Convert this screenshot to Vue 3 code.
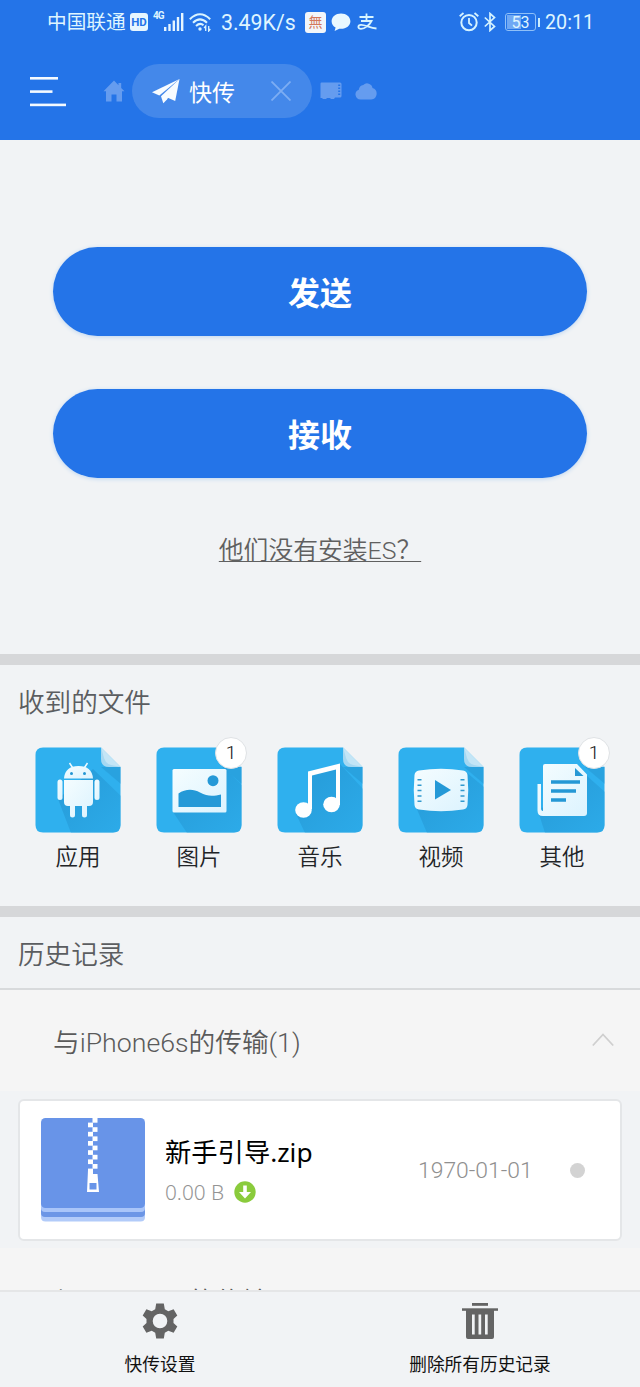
<script setup>
const categories = [
  { key: 'app', label: '应用' },
  { key: 'image', label: '图片', count: 1 },
  { key: 'music', label: '音乐' },
  { key: 'video', label: '视频' },
  { key: 'other', label: '其他', count: 1 },
]
const teeth = Array.from({ length: 12 }, (_, i) => ({ x: i % 2 ? 47 : 51.5, y: i * 4.6 }))
</script>

<template>
  <div class="screen">
    <header class="top">
      <div class="status">
        <span class="carrier">中国联通</span>
        <span class="hd">HD</span>
        <span class="net">4G</span>
        <svg class="signal" width="20" height="18" viewBox="0 0 20 18" fill="#e6f6ff">
          <rect x="0" y="14" width="2.4" height="4" /><rect x="4.3" y="11" width="2.4" height="7" />
          <rect x="8.6" y="7.5" width="2.4" height="10.5" /><rect x="12.8" y="4" width="2.4" height="14" />
          <rect x="17" y="0" width="2.4" height="18" />
        </svg>
        <svg class="wifi" width="22" height="19" viewBox="0 0 22 19" fill="none" stroke="#d9f4ff" stroke-width="2">
          <path d="M.8 6.2Q11-3.8 21.2 6.2M4 9.8Q11 3 18 9.8M7 13Q11 9.2 14.5 12.2" />
          <circle cx="11" cy="16" r="1.7" fill="#d9f4ff" stroke="none" />
          <path d="M16.7 18v-5l-1.6 2M19.7 13v5l1.6-2" stroke-width="1.3" />
        </svg>
        <span class="speed">3.49K/s</span>
        <span class="wu">無</span>
        <svg class="bubble" width="20" height="19" viewBox="0 0 20 19" fill="#e9f8ff">
          <path d="M10 .5C4.700 .5.600 3.900.600 8.200c0 2.800 1.600 5 4 6.400L3.600 18l4.700-2.300c.6.1 1.100.1 1.700.1 5.300 0 9.400-3.300 9.400-7.600S15.300.5 10 .5z" />
        </svg>
        <svg class="zhi" width="20" height="18" viewBox="0 0 20 18" fill="none" stroke="#d8f5ff" stroke-width="1.800">
          <path d="M2.500 4H16.500M9.500.500V8M4 8H14.500C12.500 12 8 15.800 4 15.800C.500 15.800.500 12 4 11.800C8 11.600 13 15 19.500 15.500" />
        </svg>
        <svg class="alarm" width="20" height="20" viewBox="0 0 20 20" fill="none" stroke="#d5f3ff" stroke-width="2">
          <circle cx="10" cy="10.600" r="7.700" /><path d="M10 6v5l3 2.700M.7 4.200 4.500 1M19.300 4.200 15.500 1" stroke-width="1.800" />
        </svg>
        <svg class="bt" width="12" height="20" viewBox="0 0 12 20" fill="none" stroke="#d5f3ff" stroke-width="1.700">
          <path d="M.8 5.500 10.500 14.500 6 18.500V1.500L10.500 5.500.8 14.500" />
        </svg>
        <span class="battery"><span class="level">53</span></span>
        <span class="nub"></span>
        <span class="clock">20:11</span>
      </div>
      <nav class="tabs">
        <svg class="menu" width="36" height="32" viewBox="0 0 36 32" fill="#f4faff">
          <rect y="1" width="28" height="2.600" /><rect y="14.300" width="22.500" height="2.600" /><rect y="27.600" width="36" height="2.600" />
        </svg>
        <svg class="home" width="22" height="22" viewBox="0 0 22 22" fill="#659cef">
          <path d="M11 .5.500 11.300H3V21.500H8.500V14.500H13.500V21.500H19V11.300H21.500L18.200 8V3H15.500V5.200z" />
        </svg>
        <div class="pill">
          <svg class="plane" width="28" height="25" viewBox="0 0 28 25" fill="#f8fcff">
            <path d="M27.500 0 0 13.200 7.300 16.500z" /><path d="M27.500 0 9 17.300 11.300 24.300 15 20.400z" />
            <path d="M27.500 0 13.500 17.700 23.200 22z" />
          </svg>
          <span class="pill-text">快传</span>
          <svg class="close" width="20" height="20" viewBox="0 0 20 20" stroke="#7dadf3" stroke-width="1.800"><path d="M.5.500 19.500 19.500M19.500.500.500 19.500" /></svg>
        </div>
        <svg class="sd" width="22" height="18" viewBox="0 0 22 18">
          <path fill="#659cef" d="M1.500.500h18.500q1.500 0 1.500 1.500v12q0 1.500-1.500 1.500h-5l-1 1.500h-3l-1-1H7l-1 1H3L2 16H.500V1.500q0-1 1-1z" />
          <path d="M19.200 2.500v12" stroke="#2474e8" stroke-width="2" stroke-dasharray="1.500 1.500" />
        </svg>
        <svg class="cloud" width="22" height="18" viewBox="0 0 22 18" fill="#659cef">
          <path d="M5.500 17.500a5 5 0 0 1-1.700-9.700A5.500 5.500 0 0 1 8.300 3 5.400 5.400 0 0 1 17.500 6a5.900 5.900 0 0 1-1.200 11.500z" />
        </svg>
      </nav>
    </header>

    <section class="actions">
      <button class="big">发送</button>
      <button class="big">接收</button>
      <a class="help">他们没有安装ES？</a>
    </section>

    <section class="files">
      <h2>收到的文件</h2>
      <div class="grid">
        <div v-for="c in categories" :key="c.key" class="cell">
          <div class="tile">
            <svg width="86" height="86" viewBox="0 0 86 86">
              <defs>
                <linearGradient :id="'sh' + c.key" x1="0" y1="0" x2="1" y2="1">
                  <stop offset=".3" stop-color="#2496d3" /><stop offset="1" stop-color="#2ba8e6" />
                </linearGradient>
                <linearGradient :id="'wh' + c.key" x1="0" y1="0" x2="1" y2="1">
                  <stop offset="0" stop-color="#f5fdff" /><stop offset="1" stop-color="#dcf3fe" />
                </linearGradient>
                <clipPath :id="'cp' + c.key"><path d="M8 .5H66L85.500 20V78q0 7.500-7.500 7.500H8Q.500 85.500.500 78V8Q.500.500 8 .5z" /></clipPath>
              </defs>
              <g :clip-path="`url(#cp${c.key})`">
                <rect width="86" height="86" fill="#2fb0ee" />
                <path v-if="c.key === 'app'" d="M23 52 36 86H86V49L58 22z" :fill="`url(#sh${c.key})`" opacity=".65" />
                <path v-else-if="c.key === 'image'" d="M17 65 31 86H86V38L69 22z" :fill="`url(#sh${c.key})`" opacity=".65" />
                <path v-else-if="c.key === 'music'" d="M19 67 28 86H86V42L63 17 32 27V55z" :fill="`url(#sh${c.key})`" opacity=".65" />
                <path v-else-if="c.key === 'video'" d="M18 60 29 86H86V40L68 25z" :fill="`url(#sh${c.key})`" opacity=".65" />
                <path v-else d="M19 64 26 86H86V45L67 28z" :fill="`url(#sh${c.key})`" opacity=".65" />
                <path d="M66 20H86V37z" fill="#2597d4" opacity=".55" />
                <path d="M66 0V12Q66 20 74 20H86z" fill="#a5d8f2" />
                <path d="M66 0 69 11Q71 17 76 18L86 20z" fill="#c3e5f6" />
              </g>
              <g v-if="c.key === 'app'" :fill="`url(#wh${c.key})`">
                <path d="M29 31.500Q30 19 43.500 19T58 31.500z" />
                <path d="M37.500 20.500 34.500 16M49.500 20.500 52.500 16" stroke="#eefaff" stroke-width="1.500" />
                <path d="M29 33H58V55q0 4-4 4H52V68q0 2.500-2.500 2.500T47 68V59H40V68q0 2.500-2.500 2.500T35 68V59H33q-4 0-4-4z" />
                <rect x="22.500" y="32.500" width="5" height="20.500" rx="2.500" /><rect x="59.500" y="32.500" width="5" height="20.500" rx="2.500" />
                <circle cx="36.500" cy="26.500" r="1.500" fill="#2496d3" /><circle cx="49.500" cy="26.500" r="1.500" fill="#2496d3" />
              </g>
              <g v-else-if="c.key === 'image'">
                <rect x="16.500" y="22" width="54" height="43.500" rx="1.500" :fill="`url(#wh${c.key})`" />
                <circle cx="57" cy="33.700" r="5.500" fill="#2499d7" />
                <path d="M22.500 60V46.500C29 42 37 41.500 44 45.500C52 50 58 49 65 47.500V60z" fill="#2499d7" />
              </g>
              <g v-else-if="c.key === 'music'" fill="#fff">
                <ellipse cx="26.500" cy="63" rx="8.300" ry="7.700" /><ellipse cx="54.500" cy="57.500" rx="8.300" ry="7.700" />
                <path d="M31 62V24.500L63 16.500V58H59V22.500L35 28.500V62z" />
              </g>
              <g v-else-if="c.key === 'video'">
                <path d="M21 23.500Q43 20 65 23.500 69 24 69.500 28 71 43 69.500 58 69 62 65 62.500 43 66 21 62.500 17 62 16.500 58 15 43 16.500 28 17 24 21 23.500z" :fill="`url(#wh${c.key})`" />
                <path d="M37 33 53 43 37 52.500z" fill="#2499d7" />
                <path d="M21.500 32v24M64.500 32v24" stroke="#3199ce" stroke-width="4" stroke-dasharray="1.500 3.900" />
              </g>
              <g v-else>
                <path d="M26 17H58L68 27.500V66q0 3-3 3H24q-5.500 0-5.500-5.500V37H22V61q0 3 2 3V19q0-2 2-2z" :fill="`url(#wh${c.key})`" />
                <path d="M56 21V29H64.500z" fill="#2598d5" />
                <path d="M32 35H61M32 44H57M32 53H47" stroke="#2598d5" stroke-width="3.500" />
              </g>
            </svg>
            <span v-if="c.count" class="badge">{{ c.count }}</span>
          </div>
          <span class="label">{{ c.label }}</span>
        </div>
      </div>
    </section>

    <section class="history">
      <h2>历史记录</h2>
      <div class="group">
        <span>与iPhone6s的传输(1)</span>
        <svg width="22" height="14" viewBox="0 0 22 14" fill="none" stroke="#cfcfcf" stroke-width="1.800"><path d="M.8 12.500 11 1.500 21.200 12.500" /></svg>
      </div>
      <div class="card">
        <svg class="zip" width="104" height="104" viewBox="0 0 104 104">
          <path d="M0 90H104V99q0 4.500-4.500 4.500H4.500Q0 103.500 0 99z" fill="#b2cbf9" />
          <path d="M0 86H104V95q0 4-4 4H4Q0 99 0 95z" fill="#6c96e6" />
          <path d="M0 82H104V90q0 4-4 4H4Q0 94 0 90z" fill="#a9c5f9" />
          <rect width="104" height="90" rx="4.500" fill="#6894e8" />
          <rect v-for="t in teeth" :key="t.y" :x="t.x" :y="t.y" width="5" height="4.700" fill="#fff" />
          <path fill-rule="evenodd" fill="#fff" d="M47 52H52V56H56.500L58 74H46zM48.500 65V71.500H55.500V65z" />
        </svg>
        <div class="info">
          <span class="name">新手引导.zip</span>
          <span class="meta">0.00 B
            <svg width="22" height="22" viewBox="0 0 22 22"><circle cx="11" cy="11" r="10.700" fill="#8acb3c" /><path d="M9.200 4.500H12.800V11H17L11 17.500 5 11H9.200z" fill="#fff" /></svg>
          </span>
        </div>
        <span class="date">1970-01-01</span>
        <span class="dot"></span>
      </div>
      <div class="group next"><span>与iPhone6s的传输(1)</span></div>
    </section>

    <footer class="bottom">
      <div class="tool">
        <svg width="36" height="36" viewBox="0 0 36 36" fill="#646464">
          <path fill-rule="evenodd" d="M14.200.500H21.800L22.800 6.200 26.300 8.200 31.600 6.200 35.300 12.500 31.500 16V20L35.300 23.500 31.600 29.800 26.300 27.800 22.800 29.800 21.800 35.500H14.200L13.200 29.800 9.700 27.800 4.400 29.800.700 23.500 4.500 20V16L.700 12.500 4.400 6.200 9.700 8.200 13.200 6.200zM18 10.700a7.300 7.300 0 1 0 0 14.600 7.300 7.300 0 0 0 0-14.600z" />
        </svg>
        <span>快传设置</span>
      </div>
      <div class="tool">
        <svg width="36" height="36" viewBox="0 0 36 36" fill="#646464">
          <rect x="10" y="0" width="16" height="2.800" /><rect x="0" y="5.300" width="36" height="2.500" />
          <path fill-rule="evenodd" d="M4 7H32V34q0 2-2 2H6q-2 0-2-2zM10 11.500V31.500H12.700V11.500zM16.500 11.500V31.500H19.200V11.500zM23 11.500V31.500H25.700V11.500z" />
        </svg>
        <span>删除所有历史记录</span>
      </div>
    </footer>
  </div>
</template>

<style>
body { margin: 0; }
</style>

<style scoped>
* { box-sizing: border-box; }
svg { display: block; flex: none; }
.screen {
  width: 640px; height: 1387px; overflow: hidden; display: flex; flex-direction: column;
  background: #f1f3f5; font-family: Roboto, "Noto Sans CJK SC", sans-serif; font-weight: 350; color: #111;
}
.top { height: 140px; flex: none; background: #2474e8; }
.status { height: 44px; display: flex; align-items: center; white-space: nowrap; color: #dff5ff; line-height: 24px; font-weight: 400; }
.status > * { flex: none; }
.carrier { margin-left: 47px; width: 79px; font-size: 19.700px; padding-top: 2px; }
.hd { margin-left: 4px; width: 18px; height: 18px; border-radius: 3px; background: #e6f6ff; color: #2474e8; font-size: 11.500px; font-weight: 700; line-height: 18px; text-align: center; }
.net { margin-left: 5px; width: 10px; font-size: 10px; font-weight: 700; line-height: 12px; margin-top: -12px; letter-spacing: -1px; }
.signal { margin-left: 1px; }
.wifi { margin-left: 5px; }
.speed { margin-left: 10px; width: 75px; font-size: 21.300px; padding-top: 1px; }
.wu { margin-left: 9px; width: 21px; height: 21px; border-radius: 3px; background: #f2f6fa; color: #d3785c; font-size: 14px; line-height: 20px; text-align: center; }
.bubble { margin-left: 5px; }
.zhi { margin-left: 6px; }
.alarm { margin-left: 82px; }
.bt { margin-left: 5px; }
.battery { margin-left: 9px; width: 31px; height: 18px; padding: 1px; border: 1px solid #8fc0f8; border-radius: 3px; }
.level { display: block; height: 14px; background: linear-gradient(90deg, #6fa8f4 53%, transparent 53%); font-size: 16px; line-height: 15px; text-align: center; }
.nub { width: 2px; height: 9px; margin-left: 2px; background: #c9edff; }
.clock { margin-left: 5px; padding-top: 1px; font-size: 19.700px; }
.tabs { display: flex; align-items: center; height: 54px; margin-top: 20px; }
.menu { margin: 2px 0 0 30px; }
.home { margin-left: 37px; }
.pill { width: 180px; height: 54px; margin-left: 7px; border-radius: 27px; background: #4488ea; display: flex; align-items: center; color: #fff; }
.plane { margin-left: 20px; }
.pill-text { margin-left: 9px; width: 46px; font-size: 23px; font-weight: 400; white-space: nowrap; }
.close { margin-left: 36px; }
.sd { margin-left: 8px; }
.cloud { margin-left: 13px; }
.actions { height: 525px; flex: none; border-bottom: 11px solid #d6d7d9; padding: 107px 53px 0; display: flex; flex-direction: column; align-items: center; }
.big { width: 534px; height: 89px; margin: 0 0 53px; padding: 5px 0 0; border: 0; border-radius: 45px; background: #2474e8; box-shadow: 0 1px 4px #bdd6f1; color: #fff; font: 700 32px/44px Roboto, "Noto Sans CJK SC", sans-serif; flex: none; }
.help { margin-top: 2px; font-size: 24.800px; line-height: 36px; color: #606060; text-decoration: underline; text-decoration-thickness: 1px; text-underline-offset: 2px; white-space: nowrap; }
h2 { margin: 0 0 0 18px; font-size: 26.600px; font-weight: 350; line-height: 36px; color: #5b5d60; }
.files { height: 252px; flex: none; padding-top: 20px; border-bottom: 11px solid #d6d7d9; }
.grid { display: flex; gap: 35px; padding-left: 35px; margin-top: 26px; }
.cell { width: 86px; display: flex; flex-direction: column; align-items: center; }
.tile { position: relative; }
.badge { position: absolute; top: -10px; right: -5px; width: 32px; height: 32px; border-radius: 50%; background: #fff; border: 1px solid #dfe2e5; font-size: 19px; line-height: 30px; text-align: center; }
.label { margin-top: 8px; font-size: 22.500px; line-height: 32px; color: #222427; white-space: nowrap; }
.history { flex: 1; min-height: 0; overflow: hidden; }
.history h2 { margin: 0; padding: 20px 18px 15px; border-bottom: 2px solid #d8dadc; height: 73px; }
.group { height: 101px; background: #f5f5f5; display: flex; align-items: center; justify-content: space-between; padding: 0 26px 1px 53px; font-size: 26.700px; color: #5a5a5a; white-space: nowrap; }
.next { padding-top: 2px; }
.card { height: 142px; margin: 8px 18px 7px; border: 2px solid #e4e6e8; border-radius: 6px; background: #fff; display: flex; align-items: center; padding-left: 21px; }
.info { margin-left: 20px; width: 253px; display: flex; flex-direction: column; white-space: nowrap; font-family: "Noto Sans", "Noto Sans CJK SC", sans-serif; }
.name { font-size: 26.300px; line-height: 36px; color: #000; font-weight: 400; }
.meta { display: flex; align-items: center; gap: 10px; margin-top: 8px; font-size: 20.800px; line-height: 28px; color: #949494; }
.date { width: 116px; font-size: 22.900px; color: #909090; white-space: nowrap; }
.dot { width: 15px; height: 15px; margin-left: 36px; border-radius: 50%; background: #d3d3d3; }
.bottom { height: 97px; flex: none; border-top: 2px solid #e5e6e7; display: flex; background: #f1f3f5; }
.tool { flex: 1; display: flex; flex-direction: column; align-items: center; padding-top: 11px; font-size: 17.700px; line-height: 26px; font-weight: 400; }
.tool span { margin-top: 13px; }
</style>
